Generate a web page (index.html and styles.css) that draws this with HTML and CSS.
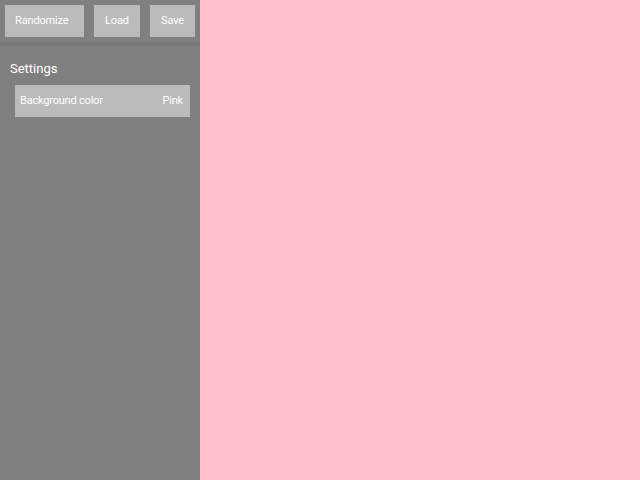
FILE: index.html
```html
<!DOCTYPE html>
<html>
<head>
<meta charset="utf-8">
<link rel="stylesheet" href="styles.css">
</head>
<body>
<div class="app">
  <aside class="sidebar">
    <div class="toolbar">
      <button class="btn btn-random">Randomize</button>
      <button class="btn btn-load">Load</button>
      <button class="btn btn-save">Save</button>
    </div>
    <div class="settings">
      <div class="settings-title">Settings</div>
      <div class="setting-row">
        <span>Background color</span>
        <span>Pink</span>
      </div>
    </div>
  </aside>
  <main class="canvas"></main>
</div>
</body>
</html>
```

FILE: styles.css
```css
html, body {
  margin: 0;
  padding: 0;
  width: 640px;
  height: 480px;
  overflow: hidden;
  font-family: Roboto, "Liberation Sans", sans-serif;
}
.app {
  display: flex;
  width: 640px;
  height: 480px;
}
.sidebar {
  width: 200px;
  background: #808080;
  display: flex;
  flex-direction: column;
}
.toolbar {
  display: flex;
  gap: 10px;
  padding: 5px;
  height: 32px;
  border-bottom: 4px solid #787878;
}
.btn {
  border: none;
  margin: 0;
  background: #bbbbbb;
  color: #ffffff;
  font-family: Roboto, "Liberation Sans", sans-serif;
  font-size: 11px;
  letter-spacing: -0.15px;
  height: 32px;
  padding: 0 0 1px 0;
  text-align: center;
}
.btn-random {
  flex: 0 0 79px;
  text-align: left;
  padding-left: 10px;
}
.btn-load {
  flex: 0 0 46px;
}
.btn-save {
  flex: 0 0 45px;
}
.settings {
  padding: 10px 10px 0 10px;
}
.settings-title {
  color: #ffffff;
  font-size: 13px;
  line-height: 20px;
  margin-top: 3px;
  margin-bottom: 6px;
}
.setting-row {
  margin-left: 5px;
  height: 32px;
  box-sizing: border-box;
  padding: 0 7px 1px 5px;
  background: #bbbbbb;
  color: #ffffff;
  font-size: 11px;
  letter-spacing: -0.2px;
  display: flex;
  align-items: center;
  justify-content: space-between;
}
.canvas {
  flex: 1;
  background: #ffc0cb;
}
```
